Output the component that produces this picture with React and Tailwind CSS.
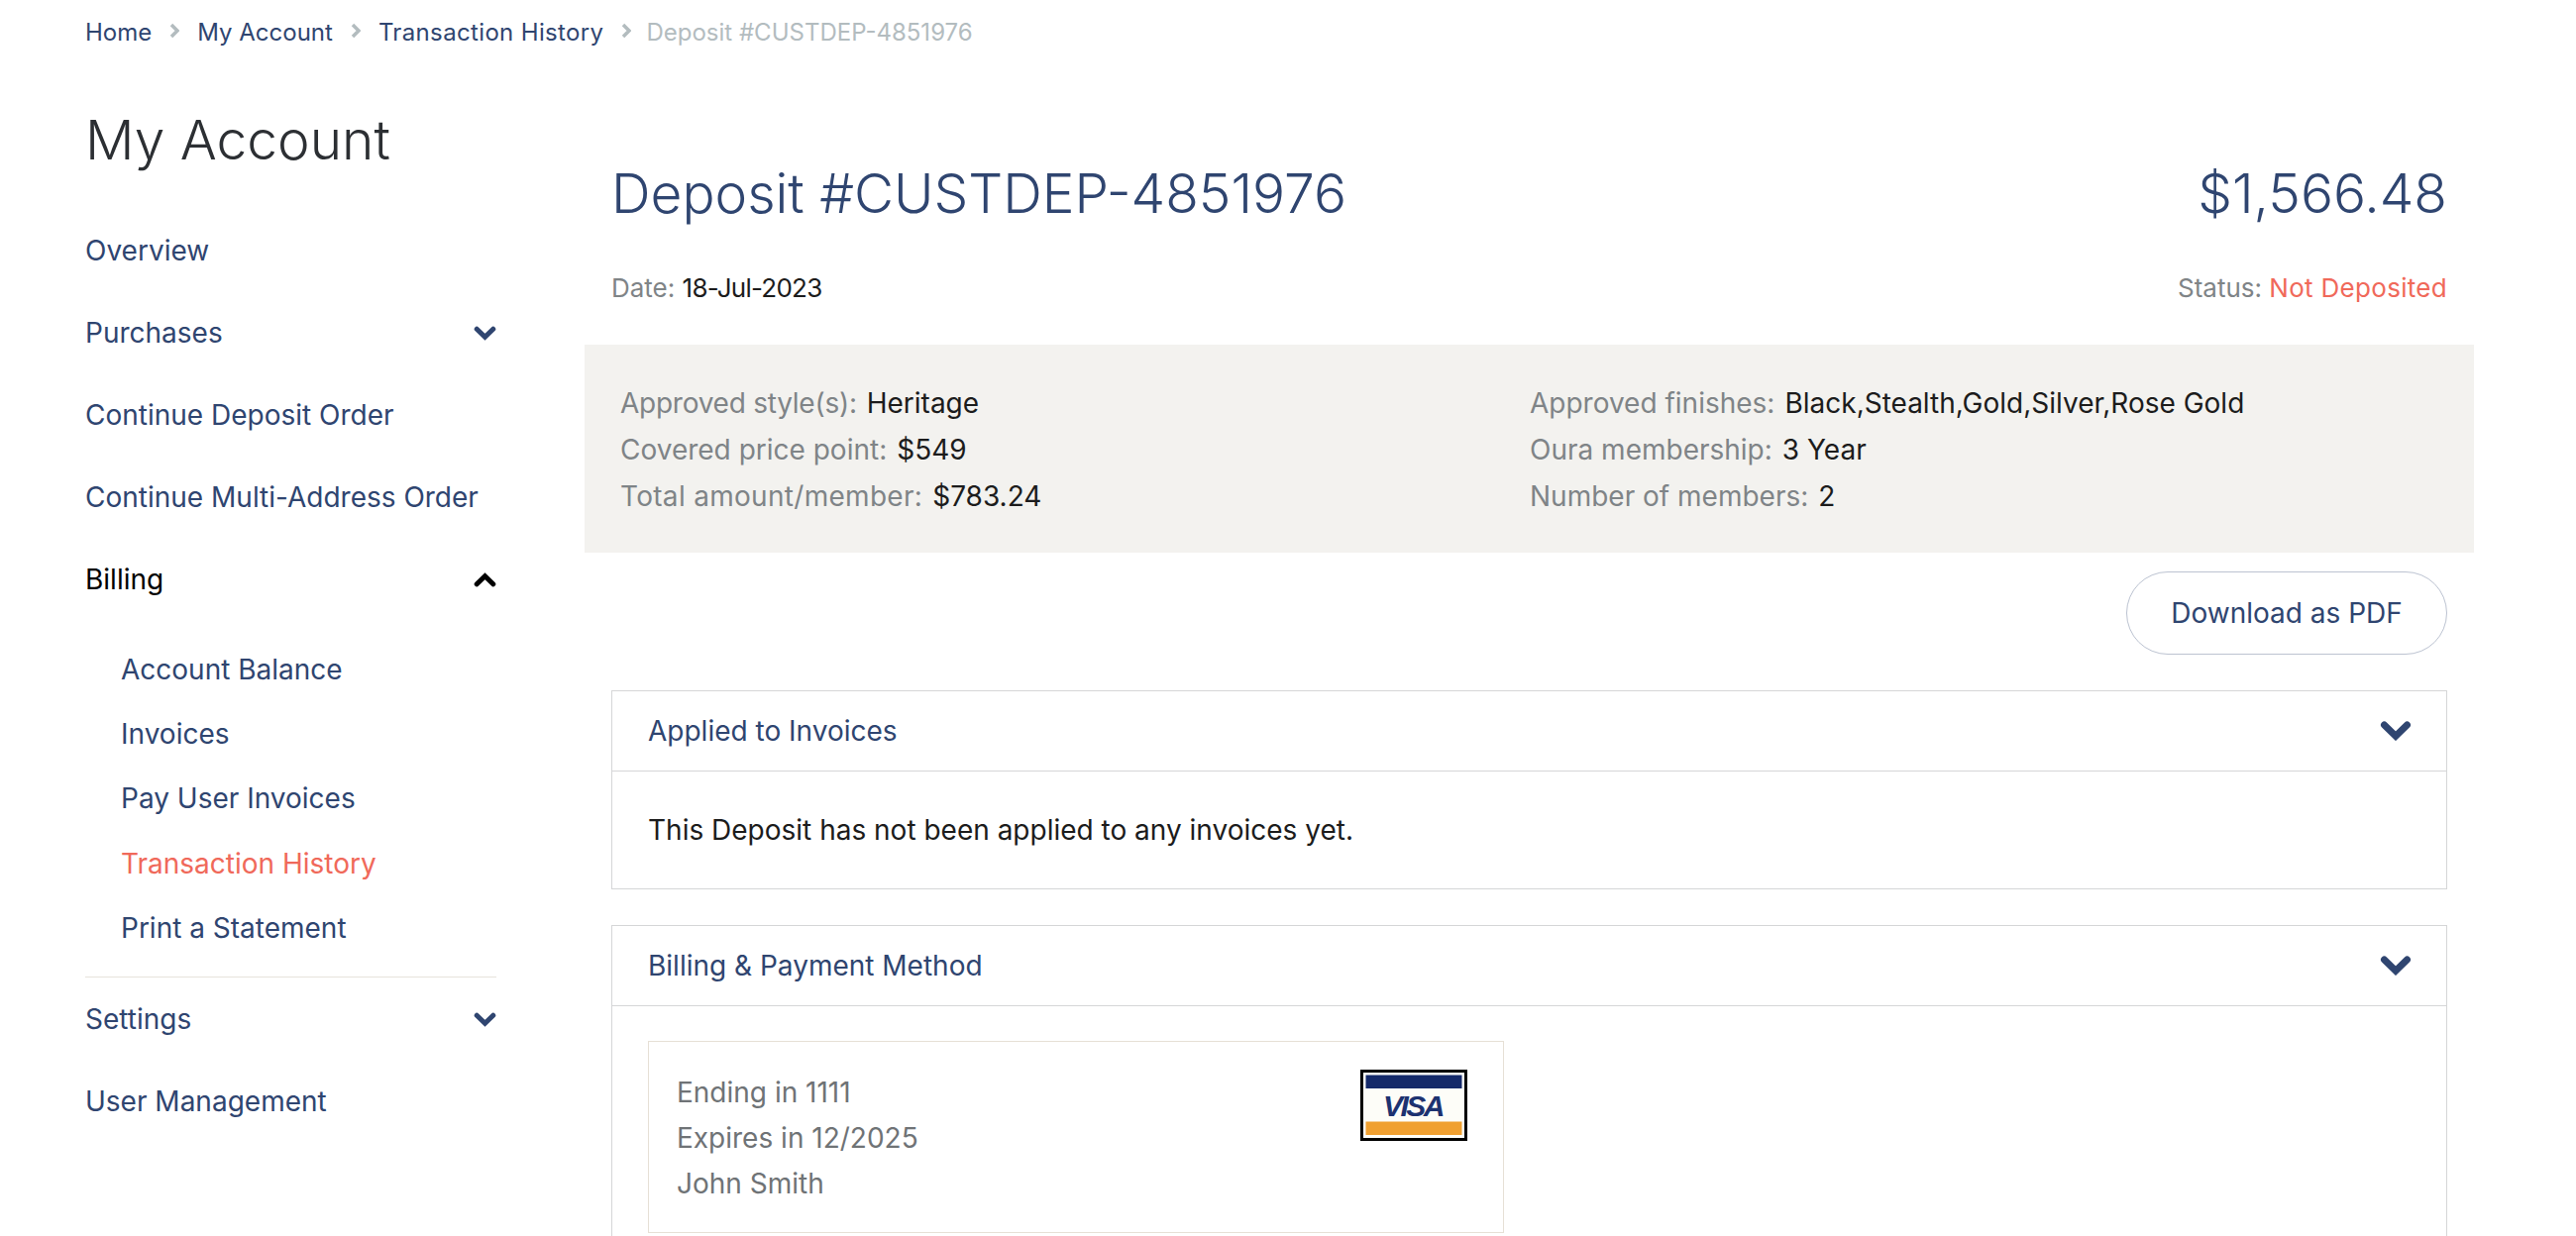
import { Fragment } from 'react'

const crumbs = ['Home', 'My Account', 'Transaction History']
const subItems = ['Account Balance', 'Invoices', 'Pay User Invoices', 'Transaction History', 'Print a Statement']

function Chevron({ up, className }) {
  return (
    <svg viewBox="0 0 32 20" className={className} fill="none" stroke="currentColor" strokeWidth="7" strokeLinecap="round" strokeLinejoin="miter">
      <path d={up ? 'M4.5 16 L16 4.8 L27.5 16' : 'M4.5 4 L16 15.2 L27.5 4'} />
    </svg>
  )
}

function Crumb({ children, wide }) {
  return (
    <Fragment>
      <a className={`text-[#2f4570] ${wide ? 'tracking-[0.35px]' : ''}`}>{children}</a>
      <svg viewBox="0 0 10 16" className="w-[10px] h-[18px] mx-[18px] mb-[4px] text-[#b3bcbf]" fill="none" stroke="currentColor" strokeWidth="3.5">
        <path d="M2 2 L8 8 L2 14" />
      </svg>
    </Fragment>
  )
}

function NavRow({ label, chevron, up, active }) {
  return (
    <div className={`flex items-center justify-between h-[83px] ${active ? 'text-black' : 'text-[#2f4570]'}`}>
      <span>{label}</span>
      {chevron && <Chevron up={up} className="w-[23px] h-[15px] mt-[2px]" />}
    </div>
  )
}

function Field({ label, value, labelClass = '' }) {
  return (
    <div className="h-[47px] flex items-center">
      <span className={`text-[#7f8487] mr-[10px] ${labelClass}`}>{label}</span>
      <span className="text-[#1c1c1c]">{value}</span>
    </div>
  )
}

function Panel({ title, children, className }) {
  return (
    <div className={`border border-[#d5d6d7] ${className}`}>
      <div className="h-[81px] flex items-center justify-between pl-[36px] pr-[35px] border-b border-[#d5d6d7] text-[#2f4570]">
        <span>{title}</span>
        <Chevron className="w-[32px] h-[20px]" />
      </div>
      {children}
    </div>
  )
}

function VisaCard() {
  return (
    <svg viewBox="0 0 108 72" className="w-[108px] h-[72px]">
      <rect width="108" height="72" fill="#000" />
      <rect x="3" y="3" width="102" height="66" fill="#fdfdf8" />
      <rect x="5.5" y="5.5" width="97" height="13.5" fill="#14296a" />
      <rect x="5.5" y="52.5" width="97" height="13.5" fill="#f0a030" />
      <text x="53" y="47" textAnchor="middle" fontFamily="Liberation Sans, sans-serif" fontWeight="700" fontStyle="italic" fontSize="30" letterSpacing="-2.5" fill="#1d3270">VISA</text>
    </svg>
  )
}

export default function App() {
  return (
    <div className="h-[1248px] w-[2600px] overflow-hidden bg-white font-['Inter',sans-serif] text-[28px] font-normal">
      <div className="h-[66px] pl-[86px] flex items-center text-[24px]">
        {crumbs.map(c => <Crumb key={c} wide={c === 'Transaction History'}>{c}</Crumb>)}
        <span className="text-[#b3bcbf] -ml-[3px]">Deposit #CUSTDEP-4851976</span>
      </div>

      <div className="flex pl-[86px]">
        <aside className="w-[415px] shrink-0">
          <h2 className="text-[55px] font-light text-[#2c2f33] h-[145px] pt-[39px] leading-[72px]">My Account</h2>
          <nav>
            <NavRow label="Overview" />
            <NavRow label="Purchases" chevron />
            <NavRow label="Continue Deposit Order" />
            <NavRow label="Continue Multi-Address Order" />
            <NavRow label="Billing" chevron up active />
            <ul className="pl-[36px] pt-[17px] pb-[17px] border-b border-[#e6e3dc]">
              {subItems.map(s => (
                <li key={s} className={`h-[65.3px] flex items-center ${s === 'Transaction History' ? 'text-[#f0695a]' : 'text-[#2f4570]'}`}>{s}</li>
              ))}
            </ul>
            <NavRow label="Settings" chevron />
            <NavRow label="User Management" />
          </nav>
        </aside>

        <main className="ml-[116px] w-[1853px] shrink-0">
          <div className="flex items-center justify-between text-[#2f4570] text-[55px] font-light h-[78px] mt-[90px]">
            <h1>Deposit #CUSTDEP-4851976</h1>
            <span>$1,566.48</span>
          </div>
          <div className="flex items-center justify-between h-[60px] mt-[26px] text-[26px]">
            <div><span className="text-[#7f8487]">Date:</span> <span className="text-[#1c1c1c] tracking-[-0.75px]">18-Jul-2023</span></div>
            <div><span className="text-[#7f8487]">Status:</span> <span className="text-[#f0695a] tracking-[0.3px]">Not Deposited</span></div>
          </div>

          <div className="mx-[-27px] mt-[28px] h-[210px] bg-[#f3f2ef] grid grid-cols-[918px_1fr] px-[36px] py-[35px]">
            <div>
              <Field label="Approved style(s):" value="Heritage" labelClass="tracking-[-0.25px]" />
              <Field label="Covered price point:" value="$549" />
              <Field label="Total amount/member:" value="$783.24" labelClass="tracking-[0.3px]" />
            </div>
            <div>
              <Field label="Approved finishes:" value="Black,Stealth,Gold,Silver,Rose Gold" />
              <Field label="Oura membership:" value="3 Year" />
              <Field label="Number of members:" value="2" />
            </div>
          </div>

          <div className="flex justify-end mt-[19px]">
            <button className="h-[84px] w-[324px] rounded-full border border-[#bcc3d1] text-[#2f4570]">Download as PDF</button>
          </div>

          <Panel title="Applied to Invoices" className="mt-[36px]">
            <div className="h-[118px] flex items-center pl-[36px] text-[#1c1c1c]">This Deposit has not been applied to any invoices yet.</div>
          </Panel>

          <Panel title="Billing & Payment Method" className="mt-[36px] pb-[60px]">
            <div className="ml-[36px] mt-[35px] w-[864px] h-[194px] border border-[#e6e0d6] flex justify-between pl-[28px] pr-[36px] pt-[28px]">
              <div className="text-[#6f7376] leading-[46px]">
                <div>Ending in 1111</div>
                <div>Expires in 12/2025</div>
                <div>John Smith</div>
              </div>
              <VisaCard />
            </div>
          </Panel>
        </main>
      </div>
    </div>
  )
}
